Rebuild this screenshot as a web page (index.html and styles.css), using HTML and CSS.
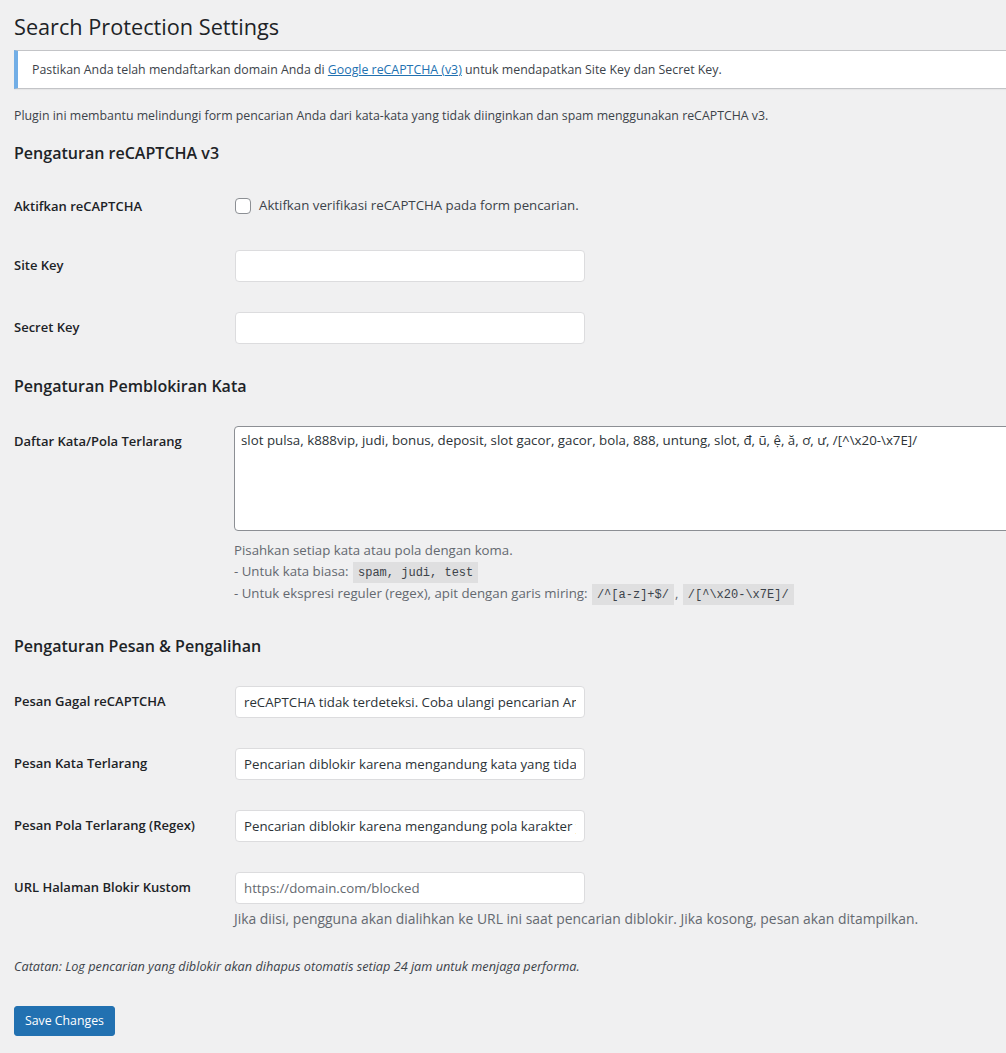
FILE: index.html
```html
<!DOCTYPE html>
<html lang="id">
<head>
<meta charset="utf-8">
<title>Search Protection Settings</title>
<link rel="stylesheet" href="styles.css">
</head>
<body>
<div class="wrap">
  <h1 class="page-title">Search Protection Settings</h1>

  <div class="notice">
    <p>Pastikan Anda telah mendaftarkan domain Anda di <a href="#">Google reCAPTCHA (v3)</a> untuk mendapatkan Site Key dan Secret Key.</p>
  </div>

  <p class="intro">Plugin ini membantu melindungi form pencarian Anda dari kata-kata yang tidak diinginkan dan spam menggunakan reCAPTCHA v3.</p>

  <form class="settings">
    <h2 class="section-title">Pengaturan reCAPTCHA v3</h2>
    <div class="form-table">
      <div class="row row-check">
        <div class="th">Aktifkan reCAPTCHA</div>
        <div class="td">
          <label class="check-label"><span class="checkbox"></span>Aktifkan verifikasi reCAPTCHA pada form pencarian.</label>
        </div>
      </div>
      <div class="row">
        <div class="th">Site Key</div>
        <div class="td"><input class="regular-text" type="text" value=""></div>
      </div>
      <div class="row">
        <div class="th">Secret Key</div>
        <div class="td"><input class="regular-text" type="text" value=""></div>
      </div>
    </div>

    <h2 class="section-title">Pengaturan Pemblokiran Kata</h2>
    <div class="form-table">
      <div class="row">
        <div class="th">Daftar Kata/Pola Terlarang</div>
        <div class="td">
          <textarea class="large-text" rows="5">slot pulsa, k888vip, judi, bonus, deposit, slot gacor, gacor, bola, 888, untung, slot, đ, ũ, ệ, ă, ơ, ư, /[^\x20-\x7E]/</textarea>
          <p class="description desc-lines">Pisahkan setiap kata atau pola dengan koma.<br>- Untuk kata biasa: <code>spam, judi, test</code><br>- Untuk ekspresi reguler (regex), apit dengan garis miring: <code>/^[a-z]+$/</code>, <code>/[^\x20-\x7E]/</code></p>
        </div>
      </div>
    </div>

    <h2 class="section-title">Pengaturan Pesan &amp; Pengalihan</h2>
    <div class="form-table">
      <div class="row">
        <div class="th">Pesan Gagal reCAPTCHA</div>
        <div class="td"><input class="regular-text" type="text" value="reCAPTCHA tidak terdeteksi. Coba ulangi pencarian Anda."></div>
      </div>
      <div class="row">
        <div class="th">Pesan Kata Terlarang</div>
        <div class="td"><input class="regular-text" type="text" value="Pencarian diblokir karena mengandung kata yang tidak diizinkan."></div>
      </div>
      <div class="row">
        <div class="th">Pesan Pola Terlarang (Regex)</div>
        <div class="td"><input class="regular-text" type="text" value="Pencarian diblokir karena mengandung pola karakter yang tidak diizinkan."></div>
      </div>
      <div class="row">
        <div class="th">URL Halaman Blokir Kustom</div>
        <div class="td">
          <input class="regular-text" type="text" placeholder="https://domain.com/blocked">
          <p class="description desc-url">Jika diisi, pengguna akan dialihkan ke URL ini saat pencarian diblokir. Jika kosong, pesan akan ditampilkan.</p>
        </div>
      </div>
    </div>

    <p class="note">Catatan: Log pencarian yang diblokir akan dihapus otomatis setiap 24 jam untuk menjaga performa.</p>

    <p class="submit"><button type="button" class="button-primary">Save Changes</button></p>
  </form>
</div>
</body>
</html>
```

FILE: styles.css
```css
html, body {
  margin: 0;
  padding: 0;
  overflow: hidden;
}

body {
  background: #f0f0f1;
  color: #3c434a;
  font-family: "Open Sans", "Noto Sans", sans-serif;
  font-size: 12.35px;
  line-height: 1.4;
}

.wrap {
  padding-left: 14px;
  width: 1012px;
}

.page-title {
  margin: 12px 0 0;
  font-size: 21.7px;
  font-weight: 400;
  line-height: 30px;
  color: #1d2327;
}

.notice {
  margin: 8px 0 0;
  background: #fff;
  border: 1px solid #c3c4c7;
  border-left: 4px solid #72aee6;
  box-shadow: 0 1px 1px rgba(0, 0, 0, 0.04);
  padding: 1px 12px;
}

.notice p {
  margin: 6.5px 0;
  padding: 2px;
  line-height: 18px;
  font-size: 12.35px;
}

.notice a {
  color: #2271b1;
  text-decoration: underline;
}

.intro {
  margin: 17px 0 0;
  line-height: 19.5px;
}

.section-title {
  margin: 16px 0 13px;
  font-size: 16.05px;
  line-height: 22px;
  font-weight: 600;
  color: #1d2327;
}

.form-table + .section-title {
  margin-top: 16px;
  margin-bottom: 14px;
}

.row {
  display: grid;
  grid-template-columns: 210px 1fr;
  align-items: start;
}

.th {
  padding: 21px 10px 19px 0;
  font-size: 13px;
  font-weight: 600;
  line-height: 18px;
  color: #1d2327;
}

.row-check .th {
  padding-top: 20px;
  padding-bottom: 20px;
}

.td {
  padding: 15px 10px;
  font-size: 13.25px;
  line-height: 1.3;
}

.check-label {
  display: flex;
  align-items: center;
  height: 28px;
  font-size: 13.25px;
  color: #3c434a;
}

.checkbox {
  width: 14px;
  height: 14px;
  border: 1px solid #8c8f94;
  border-radius: 4px;
  background: #fff;
  margin: 0 8px 0 1px;
  flex: none;
}

.regular-text {
  display: block;
  box-sizing: border-box;
  width: 350px;
  height: 32px;
  margin: 0 0 0 1px;
  padding: 0 8px;
  border: 1px solid #dcdcde;
  border-radius: 4px;
  background: #fff;
  color: #2c3338;
  font-family: inherit;
  font-size: 13.25px;
  line-height: 30px;
  box-shadow: none;
  outline: none;
}

.regular-text::placeholder {
  color: #646970;
}

.large-text {
  display: block;
  box-sizing: border-box;
  width: 800px;
  height: 105px;
  margin: 0;
  padding: 3px 6px;
  border: 1px solid #8c8f94;
  border-radius: 4px;
  background: #fff;
  color: #2c3338;
  font-family: inherit;
  font-size: 13.3px;
  line-height: 20px;
  resize: none;
  outline: none;
}

.description {
  margin: 4px 0 0;
  color: #646970;
  font-size: 13.25px;
  line-height: 19px;
}

.desc-lines {
  margin-top: 9px;
  line-height: 21.5px;
}

.desc-url {
  font-size: 13.9px;
  margin-top: 5px;
}

code {
  font-family: "Liberation Mono", "DejaVu Sans Mono", monospace;
  font-size: 12px;
  line-height: 1;
  padding: 4px 5px 3px;
  margin: 0 1px;
  background: rgba(0, 0, 0, 0.07);
  color: #3c434a;
}

.note {
  margin: 13.5px 0 0;
  font-style: italic;
  font-size: 12.7px;
  line-height: 19.5px;
}

.submit {
  margin: 30px 0 0;
  padding: 0;
}

.button-primary {
  display: inline-block;
  height: 30px;
  padding: 0 10px;
  border: 1px solid #2271b1;
  border-radius: 3px;
  background: #2271b1;
  color: #fff;
  font-family: inherit;
  font-size: 12.3px;
  line-height: 28px;
  cursor: pointer;
}
```
